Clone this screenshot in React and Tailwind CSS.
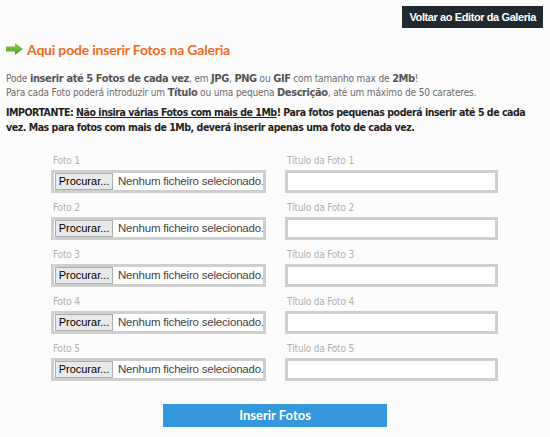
import React from "react";

const fotos = [1, 2, 3, 4, 5];
const bodyFont = { fontFamily: "'DejaVu Sans Condensed', 'DejaVu Sans', sans-serif", fontStretch: "condensed" };
const arial = { fontFamily: "'Liberation Sans', Arial, sans-serif" };

const Arrow = () => (
  <svg width="17" height="12" viewBox="0 0 17 12" className="shrink-0">
    <defs>
      <linearGradient id="ag" x1="0" y1="0" x2="0" y2="1">
        <stop offset="0" stopColor="#8fd14f" />
        <stop offset="1" stopColor="#4c9a1c" />
      </linearGradient>
    </defs>
    <path d="M0 3.5 H9 V0 L17 6 L9 12 V8.5 H0 Z" fill="url(#ag)" />
  </svg>
);

// bold bits inside the grey intro text
const B = ({ children }) => (
  <b className="text-[#555] text-[11px] tracking-[-0.4px]">{children}</b>
);

const FotoRow = ({ n }) => (
  <div className="flex gap-[19px]">
    <div className="w-[215px]">
      <div className="text-[10px] leading-[12px] text-[#b0b0b0] pl-[2px] mb-[3px] tracking-[-0.2px]" style={bodyFont}>
        Foto {n}
      </div>
      <div className="h-[23px] border-[3px] border-[#cfcfcf] bg-white flex items-center pl-[1px] gap-[5px] whitespace-nowrap overflow-hidden">
        <span className="h-[17px] w-[58px] shrink-0 border border-[#adadad] bg-[#e9e9e9] text-[11px] text-black flex items-center justify-center" style={arial}>
          Procurar...
        </span>
        <span className="text-[11.5px] text-[#444] tracking-[-0.2px]" style={arial}>
          Nenhum ficheiro selecionado.
        </span>
      </div>
    </div>
    <div className="w-[213px]">
      <div className="text-[10px] leading-[12px] text-[#b0b0b0] pl-[2px] mb-[3px] tracking-[-0.2px]" style={bodyFont}>
        Título da Foto {n}
      </div>
      <input type="text" className="block w-full h-[23px] border-[3px] border-[#cfcfcf] bg-white outline-none px-1 text-[12px]" />
    </div>
  </div>
);

export default function App() {
  return (
    <div className="w-[550px] h-[437px] bg-[#fcfcfc] px-[6px] pt-[6px] overflow-hidden" style={bodyFont}>
      <div className="flex justify-end pr-[1px]">
        <button className="h-[22px] px-[7px] bg-[#212a2e] text-white text-[11px] font-bold tracking-[-0.4px]" style={arial}>
          Voltar ao Editor da Galeria
        </button>
      </div>

      <div className="flex items-center gap-[4px] mt-[11px] h-[20px]">
        <Arrow />
        <h1 className="text-[14px] font-bold text-[#f26b1d] tracking-[-0.2px]" style={{ fontFamily: "Lato, sans-serif" }}>
          Aqui pode inserir Fotos na Galeria
        </h1>
      </div>

      <p className="mt-[13px] text-[10px] leading-[14px] text-[#6b6b6b] whitespace-nowrap tracking-[-0.15px]">
        Pode <B>inserir até 5 Fotos de cada vez</B>, em <B>JPG</B>, <B>PNG</B> ou <B>GIF</B> com tamanho max de <B>2Mb</B>!
        <br />
        Para cada Foto poderá introduzir um <B>Título</B> ou uma pequena <B>Descrição</B>, até um máximo de 50 carateres.
      </p>

      <p className="mt-[5px] text-[10.5px] leading-[15px] font-bold text-[#222] tracking-[-0.45px]">
        IMPORTANTE: <u>Não insira várias Fotos com mais de 1Mb</u>! Para fotos pequenas poderá inserir até 5 de cada vez. Mas para fotos com mais de 1Mb, deverá inserir apenas uma foto de cada vez.
      </p>

      <form className="mt-[20px] ml-[45px] flex flex-col gap-[9px]">
        {fotos.map((n) => (
          <FotoRow key={n} n={n} />
        ))}
        <div className="flex justify-start pl-[112px] mt-[14px]">
          <button type="button" className="w-[224px] h-[23px] bg-[#3498db] text-white text-[13px] font-bold" style={{ fontFamily: "Lato, sans-serif" }}>
            Inserir Fotos
          </button>
        </div>
      </form>
    </div>
  );
}
